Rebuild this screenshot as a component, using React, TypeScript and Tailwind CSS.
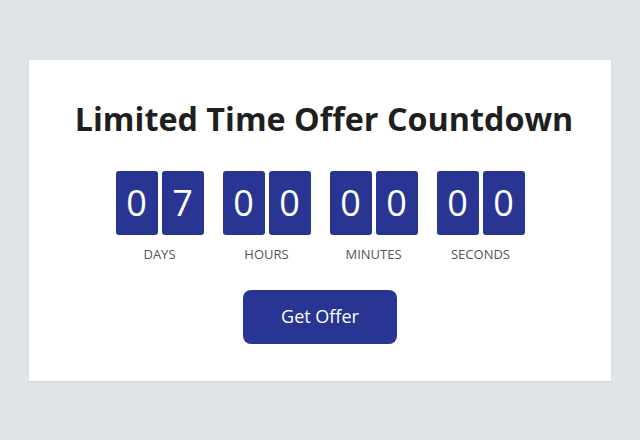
import React from "react";

const units = [
  { label: "DAYS", value: "07" },
  { label: "HOURS", value: "00" },
  { label: "MINUTES", value: "00" },
  { label: "SECONDS", value: "00" },
];

function Digit({ d }: { d: string }) {
  return (
    <div className="flex h-[64px] w-[42px] items-center justify-center rounded-[3px] bg-[#283593] text-[36px] leading-none text-white">
      {d}
    </div>
  );
}

export default function App() {
  return (
    <div
      className="flex h-[440px] w-[640px] items-center justify-center bg-[#e0e4e8]"
      style={{ fontFamily: '"Open Sans", "Noto Sans", sans-serif' }}
    >
      <div className="flex h-[321px] w-[582px] flex-col items-center bg-white pt-[36px] shadow-[0_1px_2px_rgba(0,0,0,0.06)]">
        <h1 className="pl-[8px] text-[32.3px] font-bold leading-[44px] text-[#1f1f1f]">
          Limited Time Offer Countdown
        </h1>
        <div className="mt-[31px] flex gap-[19px]">
          {units.map((u) => (
            <div key={u.label} className="flex flex-col items-center">
              <div className="flex gap-[4px]">
                {u.value.split("").map((c, i) => (
                  <Digit key={i} d={c} />
                ))}
              </div>
              <div className="mt-[10px] text-[13px] leading-[18px] text-[#555]">{u.label}</div>
            </div>
          ))}
        </div>
        <button className="mt-[27px] h-[54px] w-[154px] rounded-[8px] bg-[#283593] text-[18px] font-medium text-white">
          Get Offer
        </button>
      </div>
    </div>
  );
}
